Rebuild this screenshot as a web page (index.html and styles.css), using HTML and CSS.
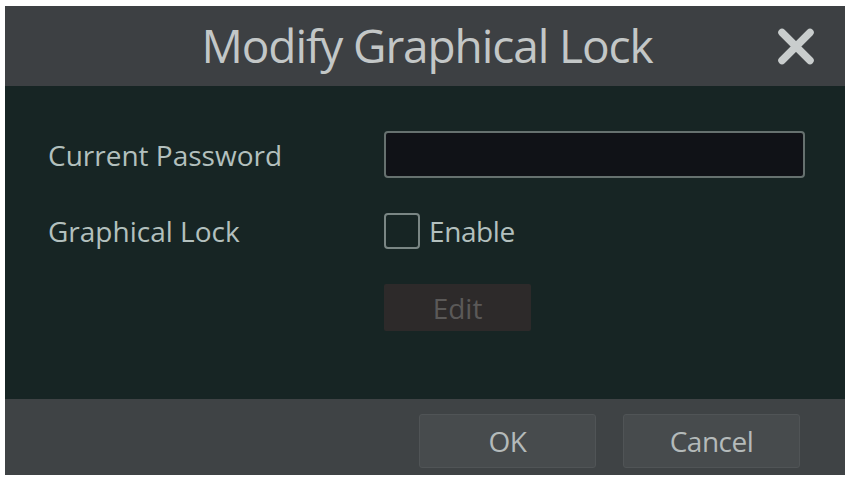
FILE: index.html
```html
<!DOCTYPE html>
<html>
<head>
<meta charset="utf-8">
<link rel="stylesheet" href="styles.css">
</head>
<body>
<div class="dialog">
  <div class="header">
    <div class="title">Modify Graphical Lock</div>
    <div class="close" aria-label="Close">
      <svg width="38" height="37" viewBox="0 0 38 37">
        <path d="M5 4.5 L33 32.5 M33 4.5 L5 32.5" stroke="#c9cdcd" stroke-width="7.5" stroke-linecap="round"/>
      </svg>
    </div>
  </div>
  <div class="body">
    <div class="form">
      <div class="label">Current Password</div>
      <div class="field"><div class="input"></div></div>
      <div class="label">Graphical Lock</div>
      <div class="field check-row"><span class="checkbox"></span><span class="check-text">Enable</span></div>
      <div class="label"></div>
      <div class="field"><div class="edit-btn">Edit</div></div>
    </div>
  </div>
  <div class="footer">
    <div class="btn">OK</div>
    <div class="btn">Cancel</div>
  </div>
</div>
</body>
</html>
```

FILE: styles.css
```css
html, body {
  margin: 0;
  padding: 0;
  background: #ffffff;
}
body {
  padding: 6px 3px 0 5px;
  font-family: "Open Sans", "Noto Sans", sans-serif;
}
.dialog {
  width: 840px;
  height: 469px;
  display: flex;
  flex-direction: column;
  background: #172524;
}
.header {
  height: 80px;
  background: #3d4043;
  position: relative;
  display: flex;
  align-items: center;
  justify-content: center;
}
.title {
  color: #c3c7c7;
  font-family: "Open Sans", sans-serif;
  font-size: 46px;
  font-stretch: 90%;
  letter-spacing: -1.1px;
  line-height: 1;
  margin-left: 4px;
  margin-top: -3px;
}
.close {
  position: absolute;
  left: 772px;
  top: 22px;
  width: 38px;
  height: 37px;
}
.close svg { display: block; }
.body {
  flex: 1;
  padding: 45px 40px 0 43px;
  background: #172524;
}
.form {
  display: grid;
  grid-template-columns: 336px 1fr;
  grid-template-rows: 47px 36px 47px;
  row-gap: 35px;
}
.label {
  color: #b3c0be;
  font-size: 28px;
  font-weight: 500;
  display: flex;
  align-items: center;
  letter-spacing: 0;
}
.field {
  display: flex;
  align-items: center;
}
.input {
  width: 100%;
  height: 100%;
  box-sizing: border-box;
  background: #101217;
  border: 2px solid #66716f;
  border-radius: 4px;
}
.check-row { gap: 9px; }
.checkbox {
  width: 36px;
  height: 36px;
  box-sizing: border-box;
  border: 2px solid #7a8684;
  border-radius: 4px;
  background: #172524;
}
.check-text {
  color: #b3c0be;
  font-size: 28px;
  font-weight: 500;
  letter-spacing: -0.4px;
}
.edit-btn {
  width: 147px;
  height: 47px;
  background: #2d2a2a;
  color: #5b5958;
  font-size: 28px;
  display: flex;
  align-items: center;
  justify-content: center;
  border-radius: 2px;
}
.footer {
  height: 76px;
  background: #3f4345;
  display: flex;
  justify-content: flex-end;
  align-items: flex-start;
  padding: 15px 45px 0 0;
  box-sizing: border-box;
  gap: 27px;
}
.btn {
  width: 177px;
  height: 54px;
  box-sizing: border-box;
  background: #474b4d;
  border: 1px solid #505456;
  border-radius: 3px;
  color: #b4baba;
  font-size: 28px;
  display: flex;
  align-items: center;
  justify-content: center;
  letter-spacing: -0.5px;
}
```
